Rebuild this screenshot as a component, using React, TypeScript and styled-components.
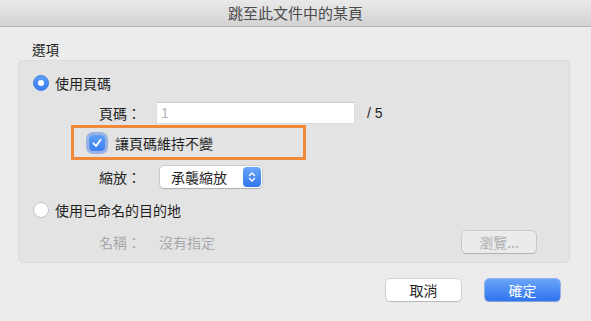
import React from 'react'
import styled, { createGlobalStyle } from 'styled-components'

const Global = createGlobalStyle`
  html, body {
    margin: 0;
    padding: 0;
    background: #ececec;
  }
  * {
    box-sizing: border-box;
  }
`

const Window = styled.div`
  width: 591px;
  height: 321px;
  background: #ececec;
  display: flex;
  flex-direction: column;
  font-family: 'Noto Sans CJK TC', 'Noto Sans', sans-serif;
  font-size: 14px;
  color: #1f1f1f;
  overflow: hidden;
`

const TitleBar = styled.div`
  height: 27px;
  flex: none;
  display: flex;
  align-items: center;
  justify-content: center;
  background: linear-gradient(#e9e9e9, #d3d3d3);
  border-bottom: 1px solid #b4b4b4;
  font-size: 15px;
  color: #4b4b4b;
  padding-bottom: 1px;
`

const Body = styled.div`
  display: flex;
  flex-direction: column;
  padding: 0 21px 0 18px;
`

const SectionLabel = styled.div`
  margin: 12px 0 0 14px;
  height: 20px;
  line-height: 20px;
  font-size: 13.5px;
`

const GroupBox = styled.div`
  margin-top: 1px;
  height: 203px;
  background: #e3e3e3;
  border: 1px solid #dadada;
  border-radius: 5px;
  display: flex;
  flex-direction: column;
  padding: 11px 0 0 0;
`

const Row = styled.div<{ $top?: number; $left?: number }>`
  display: flex;
  align-items: center;
  height: 22px;
  margin-top: ${(p) => p.$top ?? 0}px;
  padding-left: ${(p) => p.$left ?? 0}px;
`

const Radio = styled.span<{ $on?: boolean }>`
  width: 16px;
  height: 16px;
  border-radius: 50%;
  flex: none;
  display: flex;
  align-items: center;
  justify-content: center;
  background: ${(p) => (p.$on ? 'linear-gradient(#5c9cf8, #3a7ff0)' : '#ffffff')};
  border: 1px solid ${(p) => (p.$on ? '#3f7fe6' : '#c4c4c4')};
  margin-right: 6px;
  &::after {
    content: '';
    width: 6px;
    height: 6px;
    border-radius: 50%;
    background: #ffffff;
    display: ${(p) => (p.$on ? 'block' : 'none')};
  }
`

const FieldLabel = styled.span<{ $muted?: boolean }>`
  width: 123px;
  text-align: right;
  padding-right: 1px;
  flex: none;
  color: ${(p) => (p.$muted ? '#a9a9a9' : '#1f1f1f')};
`

const TextInput = styled.div`
  margin-left: 14px;
  width: 199px;
  height: 22px;
  background: #ffffff;
  border: 1px solid #dcdcdc;
  border-top-color: #cfcfcf;
  color: #b3b3b3;
  font-family: 'Liberation Sans', sans-serif;
  font-size: 14px;
  display: flex;
  align-items: center;
  padding-left: 4px;
`

const PageCount = styled.span`
  margin-left: 12px;
  font-family: 'Liberation Sans', sans-serif;
  font-size: 14px;
`

const Highlight = styled.div`
  margin: 1px 0 0 52px;
  width: 235px;
  height: 35px;
  border: 3px solid #f08a3a;
  display: flex;
  align-items: center;
  padding-left: 13px;
`

const Checkbox = styled.span`
  width: 16px;
  height: 16px;
  flex: none;
  border-radius: 4px;
  background: linear-gradient(#5f9ef8, #3b7ff0);
  box-shadow: 0 0 0 3px rgba(95, 140, 230, 0.55);
  display: flex;
  align-items: center;
  justify-content: center;
  margin-right: 10px;
  margin-left: 2px;
`

const Popup = styled.div`
  margin-left: 18px;
  width: 102px;
  height: 22px;
  background: #ffffff;
  border-radius: 4px;
  box-shadow: 0 0 0 0.5px rgba(0, 0, 0, 0.2), 0 1px 1px rgba(0, 0, 0, 0.15);
  display: flex;
  align-items: center;
  padding-left: 11px;
  position: relative;
`

const PopupText = styled.span`
  flex: 1;
`

const Stepper = styled.span`
  width: 18px;
  height: 20px;
  margin-right: 1px;
  border-radius: 4px;
  background: linear-gradient(#6aa6fa, #2f76ee);
  display: flex;
  align-items: center;
  justify-content: center;
`

const Muted = styled.span`
  color: #a9a9a9;
  margin-left: 17px;
  flex: 1;
`

const Button = styled.div<{ $primary?: boolean; $disabled?: boolean }>`
  width: 75px;
  height: 22px;
  border-radius: 4px;
  display: flex;
  align-items: center;
  justify-content: center;
  font-size: 14px;
  background: ${(p) =>
    p.$primary ? 'linear-gradient(#6aa5fa, #2f74ee)' : p.$disabled ? '#ebebeb' : '#ffffff'};
  color: ${(p) => (p.$primary ? '#ffffff' : p.$disabled ? '#b0b0b0' : '#1f1f1f')};
  box-shadow: ${(p) =>
    p.$primary
      ? '0 0 0 0.5px #3d7ae0, 0 1px 1px rgba(0,0,0,0.15)'
      : '0 0 0 0.5px rgba(0,0,0,0.22), 0 1px 1px rgba(0,0,0,0.12)'};
`

const BrowseButton = styled(Button)`
  margin-right: 33px;
  width: 74px;
`

const Footer = styled.div`
  display: flex;
  justify-content: flex-end;
  gap: 24px;
  margin-top: 16px;
  padding-right: 10px;
`

const Check = () => (
  <svg width="12" height="12" viewBox="0 0 12 12">
    <path d="M2.5 6.3 L5 9 L9.6 2.8" fill="none" stroke="#fff" strokeWidth="1.8" strokeLinecap="round" strokeLinejoin="round" />
  </svg>
)

const Chevrons = () => (
  <svg width="10" height="14" viewBox="0 0 10 14">
    <path d="M2.5 5.5 L5 3 L7.5 5.5 M2.5 8.5 L5 11 L7.5 8.5" fill="none" stroke="#fff" strokeWidth="1.4" strokeLinecap="round" strokeLinejoin="round" />
  </svg>
)

export default function App() {
  return (
    <Window>
      <Global />
      <TitleBar>跳至此文件中的某頁</TitleBar>
      <Body>
        <SectionLabel>選項</SectionLabel>
        <GroupBox>
          <Row $left={14}>
            <Radio $on />
            使用頁碼
          </Row>
          <Row $top={8}>
            <FieldLabel>頁碼：</FieldLabel>
            <TextInput>1</TextInput>
            <PageCount>/ 5</PageCount>
          </Row>
          <Highlight>
            <Checkbox>
              <Check />
            </Checkbox>
            讓頁碼維持不變
          </Highlight>
          <Row $top={6}>
            <FieldLabel>縮放：</FieldLabel>
            <Popup>
              <PopupText>承襲縮放</PopupText>
              <Stepper>
                <Chevrons />
              </Stepper>
            </Popup>
          </Row>
          <Row $top={11} $left={14}>
            <Radio />
            使用已命名的目的地
          </Row>
          <Row $top={10}>
            <FieldLabel $muted>名稱：</FieldLabel>
            <Muted>沒有指定</Muted>
            <BrowseButton $disabled>瀏覽...</BrowseButton>
          </Row>
        </GroupBox>
        <Footer>
          <Button>取消</Button>
          <Button $primary>確定</Button>
        </Footer>
      </Body>
    </Window>
  )
}
